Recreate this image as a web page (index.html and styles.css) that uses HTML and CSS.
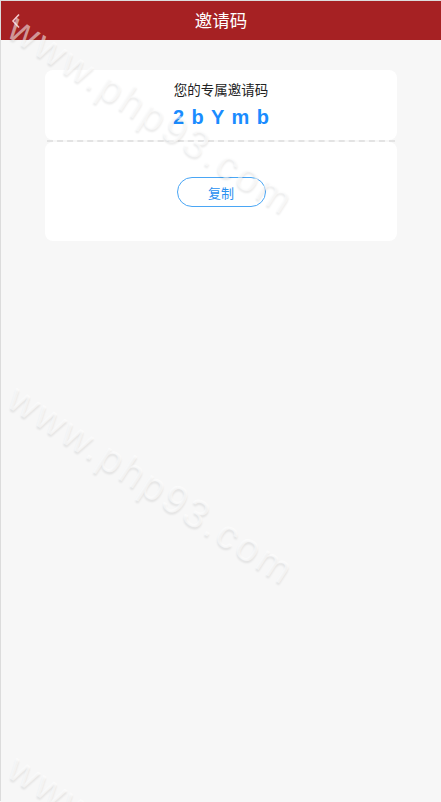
FILE: index.html
```html
<!DOCTYPE html>
<html lang="zh-CN">
<head>
<meta charset="utf-8">
<title>邀请码</title>
<link rel="stylesheet" href="styles.css">
</head>
<body>
<div class="page">
  <header class="header">
    <a class="back" aria-label="返回">
      <svg width="10" height="16" viewBox="0 0 10 16"><polyline points="8,1.5 2,8 8,14.5" fill="none" stroke="#f3c9cb" stroke-width="1.6"/></svg>
    </a>
    <h1 class="title">邀请码</h1>
  </header>
  <main class="content">
    <section class="card card-top">
      <div class="label">您的专属邀请码</div>
      <div class="code">2 b Y m b</div>
    </section>
    <div class="divider"></div>
    <section class="card card-bottom">
      <button class="copy">复制</button>
    </section>
  </main>
</div>
<div class="watermarks">
  <span class="wm wm1">www.php93.com</span>
  <span class="wm wm2">www.php93.com</span>
  <span class="wm wm3">www.php93.com</span>
</div>
</body>
</html>
```
FILE: styles.css
```css
html, body {
  margin: 0;
  padding: 0;
}
body {
  width: 441px;
  height: 802px;
  overflow: hidden;
  background: #f7f7f7;
  font-family: "Noto Sans CJK SC", "Liberation Sans", sans-serif;
  position: relative;
}
.page {
  border-top: 1px solid #dcdcdc;
  border-left: 1px solid #dcdcdc;
  height: 801px;
  box-sizing: border-box;
  background: #f7f7f7;
}
.header {
  height: 39px;
  background: #a62123;
  display: flex;
  align-items: center;
  justify-content: center;
  position: relative;
}
.back {
  position: absolute;
  left: 10px;
  top: 12px;
  display: flex;
}
.title {
  margin: 0;
  color: #fff;
  font-size: 17.5px;
  font-weight: 400;
  line-height: 1;
  margin-top: -2px;
}
.content {
  padding: 30px 44px 0 44px;
  display: flex;
  flex-direction: column;
}
.card {
  background: #fff;
  border-radius: 8px;
}
.card-top {
  height: 70px;
  display: flex;
  flex-direction: column;
  align-items: center;
}
.label {
  margin-top: 10px;
  font-size: 13.5px;
  color: #222;
  line-height: 18px;
}
.code {
  margin-top: 8px;
  font-family: "Liberation Sans", Arial, sans-serif;
  font-weight: 700;
  font-size: 20px;
  color: #1a8cff;
  line-height: 22px;
  word-spacing: 2px;
}
.divider {
  height: 0;
  border-top: 2px dashed #e3e3e3;
  margin: 0 2px;
}
.card-bottom {
  height: 99px;
  display: flex;
  justify-content: center;
  align-items: flex-start;
}
.copy {
  margin-top: 35px;
  width: 89px;
  height: 30px;
  border: 1px solid #4aa6f5;
  border-radius: 15px;
  background: #fff;
  color: #2a90f0;
  font-family: "Noto Sans CJK SC", sans-serif;
  font-size: 13px;
  padding: 0;
}
.watermarks {
  position: absolute;
  inset: 0;
  pointer-events: none;
  overflow: hidden;
}
.wm {
  position: absolute;
  left: 152px;
  font-family: "Liberation Sans", Arial, sans-serif;
  font-size: 40px;
  letter-spacing: 3px;
  white-space: nowrap;
  color: rgba(255, 255, 255, 0.55);
  text-shadow: 1px 2px 2px rgba(0, 0, 0, 0.08);
  transform: translate(-50%, -50%) rotate(33deg);
  line-height: 1;
}
.wm1 { top: 114px; }
.wm2 { top: 484px; }
.wm3 { top: 854px; }
```
